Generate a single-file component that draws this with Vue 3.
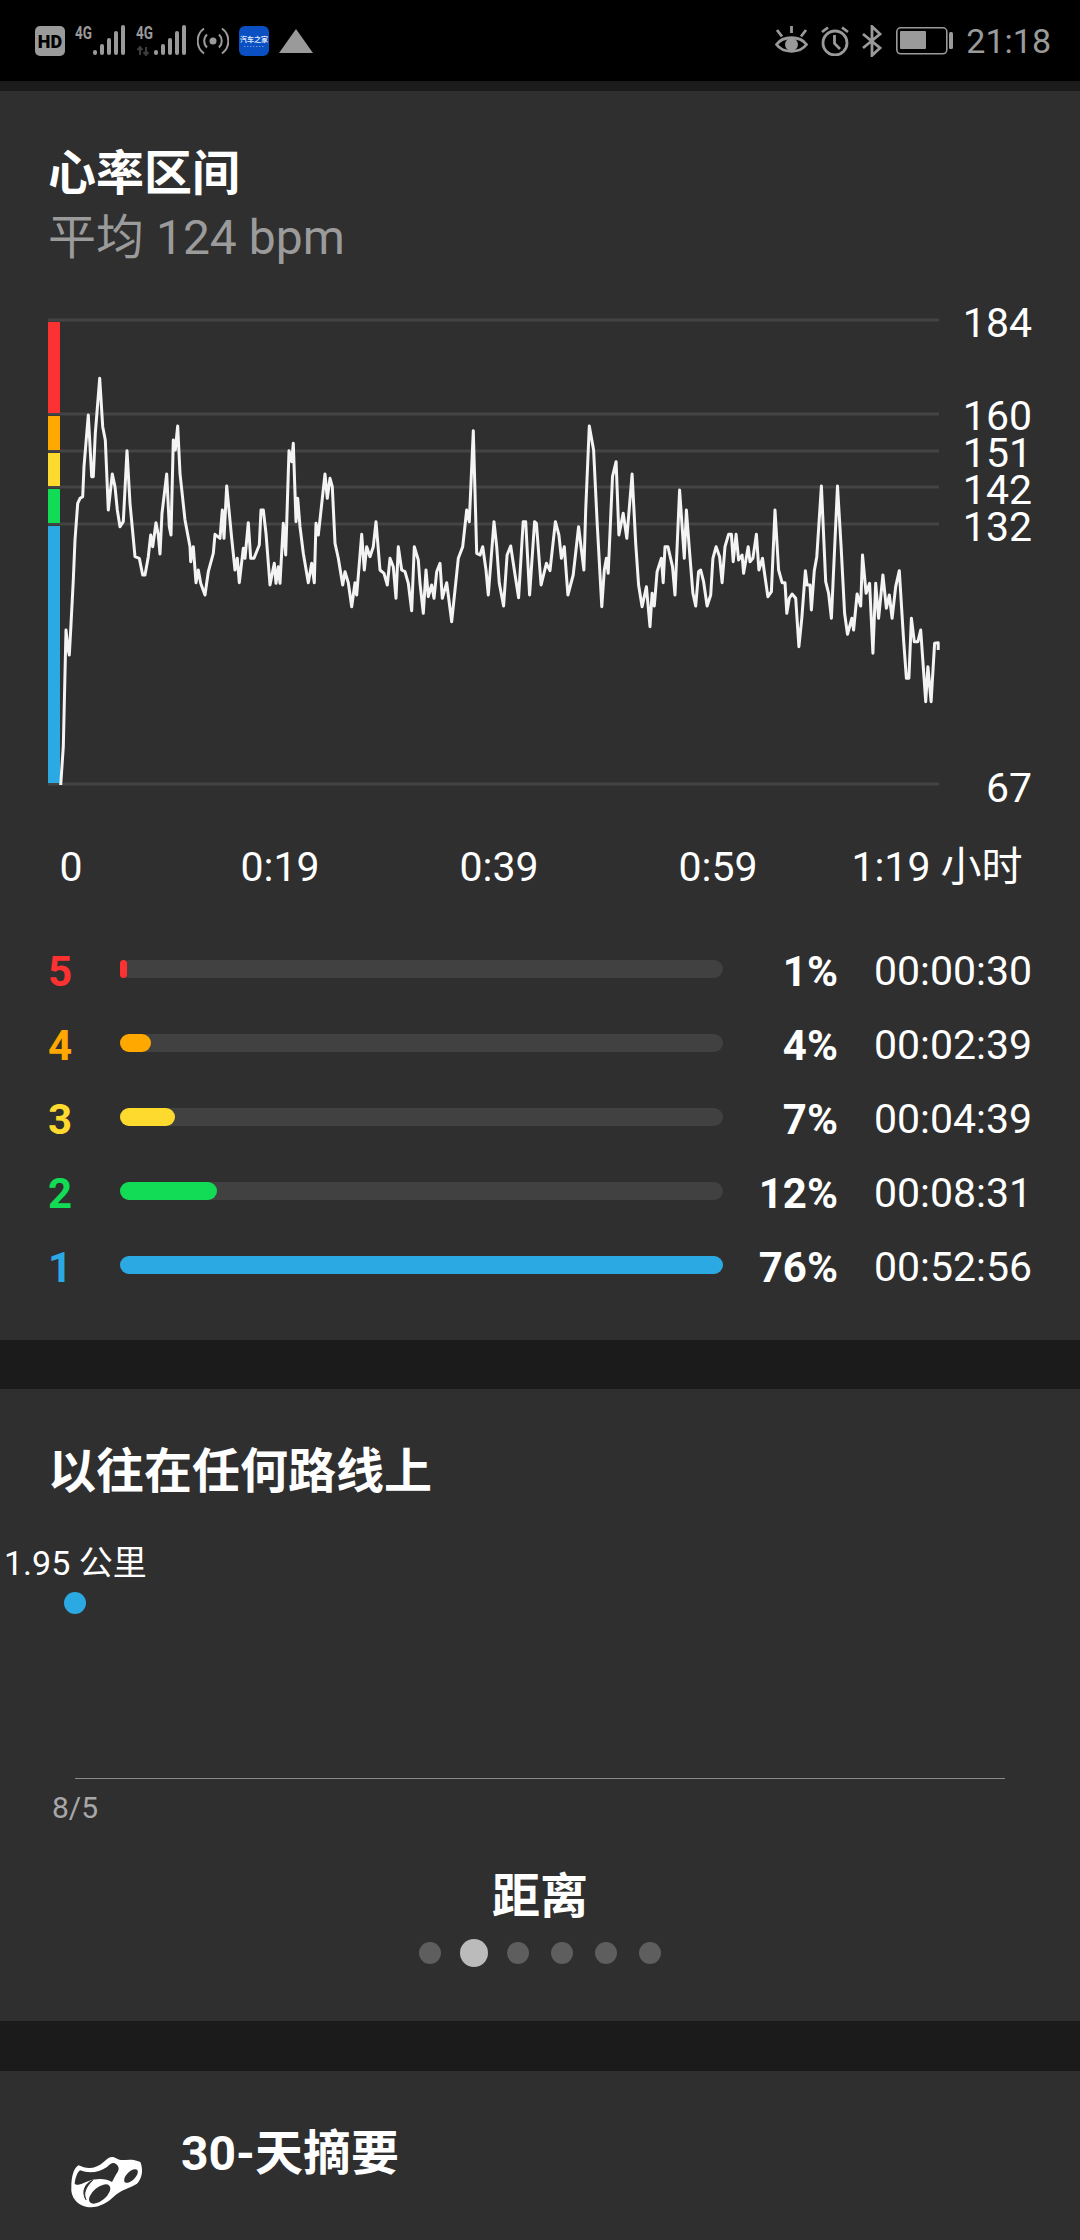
<script setup>
const raw3 = [92,1455,100,1340,108,990,113,1040,118,1065,122,990,130,840,135,720,143,610,150,595,158,590,162,500,175,345,185,530,190,530,196,400,209,235,218,380,226,420,235,630,247,522,255,560,262,630,270,680,280,665,291,452,300,610,315,770,328,775,338,825,345,825,355,770,362,705,368,740,378,668,385,705,390,762,396,640,410,522,418,680,423,705,430,420,436,450,443,378,450,520,465,660,480,740,482,785,490,740,498,848,505,810,512,850,525,885,535,815,550,760,555,703,570,715,577,630,582,715,590,558,605,715,615,810,622,775,628,848,640,745,645,775,655,668,662,775,672,775,688,735,693,630,700,630,708,700,720,855,733,790,738,850,745,800,750,850,760,670,767,765,777,452,785,485,790,430,798,665,803,595,810,680,820,760,835,848,845,790,853,848,858,670,865,705,885,522,892,595,900,535,907,560,915,730,925,775,938,855,945,815,955,848,965,920,975,848,980,885,995,703,1003,810,1010,740,1020,770,1030,740,1038,665,1050,810,1062,820,1072,855,1080,775,1090,800,1098,895,1105,740,1115,810,1125,815,1135,850,1145,932,1153,740,1165,780,1170,850,1180,940,1188,810,1195,890,1205,855,1212,895,1220,815,1230,790,1237,895,1250,848,1265,965,1285,775,1298,740,1310,630,1318,665,1330,392,1340,760,1350,765,1358,740,1368,810,1375,885,1392,665,1400,740,1408,850]
const raw4 = [10,918,20,765,30,738,40,810,52,893,65,665,72,665,83,885,97,665,102,670,115,855,130,790,140,812,155,665,165,705,172,775,180,740,190,885,205,825,220,680,235,810,240,630,250,378,262,450,272,665,285,920,292,810,298,775,303,820,315,530,325,485,333,705,345,640,355,715,370,522,380,730,388,855,398,920,410,860,420,980,426,880,432,918,440,815,452,775,457,848,462,740,470,740,483,800,490,885,503,570,516,775,522,630,530,745,540,880,548,918,556,815,562,810,570,845,580,918,590,885,596,775,605,740,615,770,622,848,630,740,640,703,648,703,653,785,661,703,668,780,678,765,682,820,695,740,700,785,708,775,718,703,725,810,735,775,740,815,750,890,760,875,770,630,780,810,790,848,798,848,803,940,810,895,818,882,828,895,837,1040,845,955,855,812,860,855,868,855,872,930,880,812,887,770,900,558,912,845,920,880,928,955,945,558,955,740,965,940,973,1003,985,955,990,990,1000,882,1010,918,1015,765,1025,880,1035,850,1044,1060,1052,850,1060,955,1072,825,1082,925,1090,885,1098,955,1108,860,1118,812,1130,1020,1138,1135,1145,1135,1152,955,1160,1025,1170,1025,1178,990,1192,1205,1198,1100,1207,1205,1217,1030,1227,1028,1227,1050]
const pts = []
for (let i = 0; i < raw3.length; i += 2) pts.push(`${(30 + raw3[i] / 3).toFixed(1)},${(300 + raw3[i + 1] / 3).toFixed(1)}`)
for (let i = 0; i < raw4.length; i += 2) pts.push(`${(500 + raw4[i] / 2.8).toFixed(1)},${(300 + raw4[i + 1] / 3).toFixed(1)}`)
const line = pts.join(' ')

const grid = [320, 414, 451, 487, 524, 784]
const zoneBars = [
  { y: 322, h: 91, c: '#fc3232' },
  { y: 416, h: 34, c: '#ffa800' },
  { y: 453, h: 33, c: '#ffda2e' },
  { y: 489, h: 34, c: '#12dc55' },
  { y: 526, h: 257, c: '#2aa9e2' },
]
const yLabels = [
  { t: '184', y: 323 },
  { t: '160', y: 416 },
  { t: '151', y: 453 },
  { t: '142', y: 490 },
  { t: '132', y: 527 },
  { t: '67', y: 788 },
]
const xLabels = ['0', '0:19', '0:39', '0:59', '1:19 小时']
const zones = [
  { n: 5, w: 7, pct: '1%', time: '00:00:30', c: '#fc3232' },
  { n: 4, w: 31, pct: '4%', time: '00:02:39', c: '#ffa800' },
  { n: 3, w: 55, pct: '7%', time: '00:04:39', c: '#ffda2e' },
  { n: 2, w: 97, pct: '12%', time: '00:08:31', c: '#12dc55' },
  { n: 1, w: 603, pct: '76%', time: '00:52:56', c: '#2aa9e2' },
]
const bars = [[18, 25], [25, 19], [32, 13], [39, 6], [46, 0]]
const pager = [0, 1, 2, 3, 4, 5]
</script>

<template>
  <div class="page">
    <header class="status">
      <div class="status-left">
        <svg width="30" height="30" viewBox="0 0 30 30">
          <rect width="30" height="30" rx="5" fill="#9a9a9a" />
          <text x="15" y="21.5" text-anchor="middle" class="hd-text">HD</text>
        </svg>
        <svg v-for="k in 2" :key="k" class="net" width="51" height="36" viewBox="0 -5 51 36">
          <text x="0" y="13.5" class="net-text" textLength="17" lengthAdjust="spacingAndGlyphs">4G</text>
          <rect v-for="b in bars" :key="b[0]" :x="b[0]" :y="b[1]" width="4" :height="30 - b[1]" rx="2" fill="#9a9a9a" />
          <path v-if="k === 2" d="M4 30V22M1.5 25L4 22L6.5 25M10 22V30M7.5 27L10 30L12.5 27" fill="none" stroke="#3c3c3c" stroke-width="2" />
        </svg>
        <svg width="32" height="30" viewBox="0 0 32 30" fill="none" stroke="#9a9a9a" stroke-width="2">
          <circle cx="16" cy="15" r="3.5" fill="#9a9a9a" stroke="none" />
          <path d="M10 8.5A9 9 0 0 0 10 21.5M22 8.5A9 9 0 0 1 22 21.5" />
          <path d="M7 2.5A15.5 15.5 0 0 0 7 27.5M25 2.5A15.5 15.5 0 0 1 25 27.5" />
        </svg>
        <svg width="30" height="30" viewBox="0 0 30 30">
          <rect width="30" height="30" rx="6" fill="#0a50c2" />
          <text x="15" y="15.5" text-anchor="middle" class="app-text">汽车之家</text>
          <path d="M5 20.5H25" stroke="#6d93da" stroke-width="1" stroke-dasharray="1.5 1.5" />
        </svg>
        <svg width="34" height="24" viewBox="0 0 34 24">
          <path d="M0 24L17 0L34 24Z" fill="#9a9a9a" />
        </svg>
      </div>
      <div class="status-right">
        <svg width="33" height="30" viewBox="0 0 33 30" fill="none" stroke="#9a9a9a" stroke-width="2.8">
          <path d="M1.5 18.5C8 9.500 25 9.500 31.500 18.500C25 27.500 8 27.500 1.500 18.500Z" />
          <circle cx="16.500" cy="18.500" r="6.500" fill="#9a9a9a" stroke="none" />
          <path d="M16.500 0V7M2 4L7 10.500M31 4L26 10.500" />
        </svg>
        <svg width="30" height="30" viewBox="0 0 30 30" fill="none" stroke="#9a9a9a" stroke-width="2.800">
          <circle cx="15" cy="17" r="12" />
          <path d="M14.500 9V17.500L20 23" />
          <path d="M2 6L8 1.500M28 6L22 1.500" />
        </svg>
        <svg width="20" height="32" viewBox="0 0 20 32" fill="none" stroke="#9a9a9a" stroke-width="2.800">
          <path d="M1 9L18 23L10 30.500V1.500L18 9L1 23" />
        </svg>
        <svg class="batt" width="58" height="28" viewBox="0 0 58 28">
          <rect x="0.800" y="0.800" width="50" height="26" rx="4" fill="none" stroke="#9a9a9a" stroke-width="1.600" />
          <rect x="4" y="4" width="26" height="18" rx="1" fill="#9a9a9a" />
          <rect x="53" y="5" width="4" height="17" rx="1.500" fill="#9a9a9a" />
        </svg>
        <span class="clock">21:18</span>
      </div>
    </header>

    <section class="card first">
      <h2 class="title">心率区间</h2>
      <p class="sub">平均 124 bpm</p>
      <div class="chart">
        <svg class="plot" width="894" height="470" viewBox="48 318 894 470">
          <line v-for="g in grid" :key="g" x1="48" x2="939" :y1="g" :y2="g" stroke="#444444" stroke-width="3" />
          <rect v-for="z in zoneBars" :key="z.y" x="48" :y="z.y" width="12" :height="z.h" :fill="z.c" />
          <polyline :points="line" fill="none" stroke="#f4f4f4" stroke-width="3" stroke-linejoin="round" />
        </svg>
        <span v-for="l in yLabels" :key="l.t" class="ylabel" :style="{ top: l.y - 318 - 15 + 'px' }">{{ l.t }}</span>
      </div>
      <div class="xaxis">
        <span v-for="x in xLabels" :key="x" class="xcell">{{ x }}</span>
      </div>
      <div class="zones">
        <div v-for="z in zones" :key="z.n" class="zone">
          <span class="znum" :style="{ color: z.c }">{{ z.n }}</span>
          <div class="track">
            <div class="fill" :style="{ width: z.w + 'px', background: z.c }"></div>
          </div>
          <span class="zpct">{{ z.pct }}</span>
          <span class="ztime">{{ z.time }}</span>
        </div>
      </div>
    </section>

    <section class="card second">
      <h2 class="title">以往在任何路线上</h2>
      <div class="trend">
        <span class="tvalue">1.95 公里</span>
        <span class="tdot"></span>
        <span class="taxis"></span>
        <span class="tdate">8/5</span>
      </div>
      <h3 class="metric">距离</h3>
      <div class="pager">
        <span v-for="p in pager" :key="p" class="pdot" :class="{ on: p === 1 }"></span>
      </div>
    </section>

    <section class="card third">
      <svg class="shoe" width="90" height="70" viewBox="0 0 270 210">
        <path d="M28 120C28 90 35 62 50 55C72 66 100 68 125 45C140 30 150 25 165 35C180 45 205 30 235 45C245 70 240 95 225 110C200 125 175 130 160 145C135 170 105 185 75 180C45 175 25 150 28 120Z" fill="#fff" />
        <path d="M38 110C40 92 46 76 54 70C80 80 110 78 135 60C148 46 155 46 163 52C172 60 172 68 165 78C158 88 155 98 150 105C130 92 95 94 70 106C55 114 45 116 38 110Z" fill="#2f2f2f" />
        <ellipse cx="207" cy="87" rx="26" ry="13" transform="rotate(-45 207 87)" fill="#2f2f2f" />
        <path d="M92 100C68 110 58 135 72 158C62 140 72 118 92 100Z" fill="#2f2f2f" stroke="#2f2f2f" stroke-width="3" />
        <ellipse cx="113" cy="141" rx="38" ry="20" transform="rotate(-40 113 141)" fill="#2f2f2f" />
      </svg>
      <h2 class="title third-title">30-天摘要</h2>
    </section>
  </div>
</template>

<style scoped>
.page {
  width: 1080px;
  height: 2240px;
  overflow: hidden;
  background: #1b1b1b;
  color: #fff;
  font-family: Roboto, "Noto Sans CJK SC", sans-serif;
  display: flex;
  flex-direction: column;
}
.status {
  height: 81px;
  flex: none;
  background: #000;
  display: flex;
  justify-content: space-between;
  align-items: flex-start;
  padding: 25px 29px 0 35px;
  box-sizing: border-box;
}
.status-left {
  display: flex;
  align-items: center;
  gap: 10px;
}
.net { margin-top: -5px; }
.hd-text {
  font: 900 18px Roboto, sans-serif;
  fill: #000;
}
.net-text {
  font: 700 18px Roboto, sans-serif;
  fill: #9a9a9a;
}
.app-text {
  font: 700 7px "Noto Sans CJK SC", sans-serif;
  fill: #dfe8fa;
}
.status-right {
  display: flex;
  align-items: center;
  gap: 12px;
}
.batt { margin-left: 2px; }
.clock {
  font-size: 34px;
  line-height: 32px;
  color: #9a9a9a;
}
.card {
  background: #2f2f2f;
  flex: none;
  box-sizing: border-box;
}
.first {
  margin-top: 10px;
  padding: 53px 0 36px;
}
.second {
  margin-top: 49px;
  padding: 53px 0 54px;
}
.third {
  margin-top: 50px;
  padding: 53px 0 0 62px;
  flex: 1;
  display: flex;
  align-items: flex-start;
}
.title {
  margin: 0 0 0 48px;
  font-size: 48px;
  line-height: 60px;
  font-weight: 700;
}
.sub {
  margin: 4px 0 0 48px;
  font-size: 48px;
  line-height: 60px;
  color: #9b9b9b;
}
.chart {
  position: relative;
  height: 470px;
  margin-top: 50px;
  padding-left: 48px;
}
.plot { display: block; }
.ylabel {
  position: absolute;
  right: 48px;
  font-size: 41px;
  line-height: 30px;
}
.xaxis {
  display: flex;
  margin-top: 54px;
  padding-left: 48px;
  font-size: 41px;
  line-height: 50px;
}
.xcell {
  width: 219px;
  text-align: center;
  flex: none;
  white-space: nowrap;
}
.xcell:first-child {
  width: 122.5px;
  padding-right: 76.5px;
  box-sizing: border-box;
}
.zones { margin-top: 42px; }
.zone {
  display: flex;
  align-items: center;
  height: 74px;
  padding-left: 48px;
  font-size: 41px;
}
.znum {
  width: 72px;
  font-size: 42px;
  font-weight: 700;
  flex: none;
}
.track {
  width: 603px;
  height: 18px;
  margin-bottom: 4px;
  background: #414141;
  border-radius: 9px;
  flex: none;
}
.fill {
  height: 100%;
  border-radius: 9px;
}
.zpct {
  width: 115px;
  text-align: right;
  font-size: 42px;
  font-weight: 700;
  flex: none;
}
.ztime {
  width: 194px;
  text-align: right;
  flex: none;
}
.trend {
  position: relative;
  height: 290px;
  margin-top: 28px;
}
.tvalue {
  position: absolute;
  left: 4px;
  top: 10px;
  font-size: 34px;
  line-height: 46px;
  white-space: nowrap;
}
.tdot {
  position: absolute;
  left: 64px;
  top: 62px;
  width: 22px;
  height: 22px;
  border-radius: 50%;
  background: #2aa9e2;
}
.taxis {
  position: absolute;
  left: 75px;
  top: 248px;
  width: 930px;
  height: 1px;
  background: #8a8a8a;
}
.tdate {
  position: absolute;
  left: 52px;
  top: 258px;
  font-size: 30px;
  line-height: 40px;
  color: #a8a8a8;
}
.metric {
  margin: 47px 0 0;
  text-align: center;
  font-size: 48px;
  line-height: 60px;
  font-weight: 700;
}
.pager {
  display: flex;
  justify-content: center;
  align-items: center;
  gap: 22px;
  height: 28px;
  margin-top: 12px;
}
.pdot {
  width: 22px;
  height: 22px;
  border-radius: 50%;
  background: #5e5e5e;
}
.pdot.on {
  width: 28px;
  height: 28px;
  margin: 0 -3px;
  background: #bbbbbb;
}
.shoe {
  flex: none;
  margin-top: 23px;
}
.third-title {
  margin-left: 29px;
}
</style>

<style>
body { background: #1b1b1b; }
</style>
